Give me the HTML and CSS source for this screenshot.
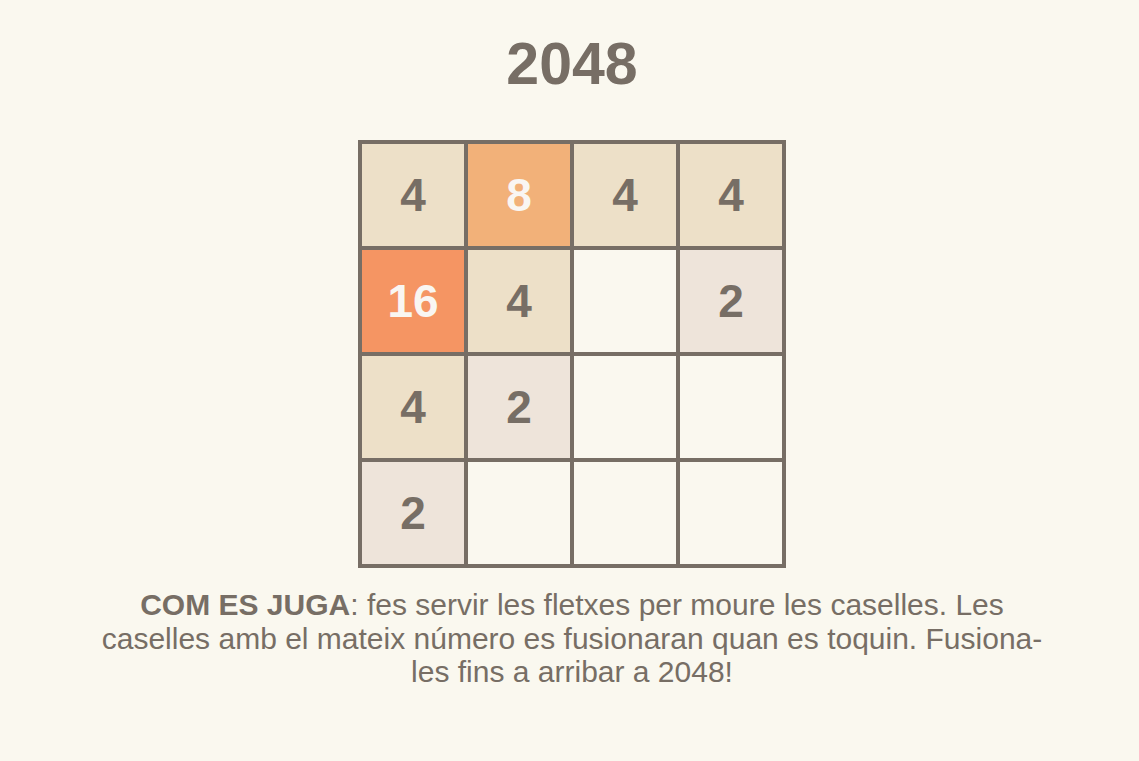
FILE: index.html
```html
<!DOCTYPE html>
<html lang="ca">
<head>
  <meta charset="UTF-8" />
  <meta name="viewport" content="width=device-width, initial-scale=1.0"/>
  <title>2048</title>
  <link rel="stylesheet" href="styles.css">
</head>
<body>
  <div class="game">
    <h1>2048</h1>

    <div class="board">
      <div class="cell t4">4</div>
      <div class="cell t8">8</div>
      <div class="cell t4">4</div>
      <div class="cell t4">4</div>

      <div class="cell t16">16</div>
      <div class="cell t4">4</div>
      <div class="cell"></div>
      <div class="cell t2">2</div>

      <div class="cell t4">4</div>
      <div class="cell t2">2</div>
      <div class="cell"></div>
      <div class="cell"></div>

      <div class="cell t2">2</div>
      <div class="cell"></div>
      <div class="cell"></div>
      <div class="cell"></div>
    </div>

    <p class="help"><strong>COM ES JUGA</strong>: fes servir les fletxes per moure les caselles. Les caselles amb el mateix número es fusionaran quan es toquin. Fusiona-les fins a arribar a 2048!</p>
  </div>
</body>
</html>
```

FILE: styles.css
```css
body {
  margin: 0;
  padding-left: 5px;
  background: #faf8ef;
  color: #776e65;
  font-family: "Liberation Sans", Arial, sans-serif;
}

.game {
  display: flex;
  flex-direction: column;
  align-items: center;
}

h1 {
  font-size: 59px;
  line-height: 59px;
  margin: 35px 0 0;
}

.board {
  display: grid;
  grid-template-columns: repeat(4, 102px);
  grid-auto-rows: 102px;
  gap: 4px;
  padding: 4px;
  margin-top: 46px;
  background: #776e65;
}

.cell {
  display: flex;
  align-items: center;
  justify-content: center;
  background: #faf8ef;
  font-size: 46px;
  font-weight: bold;
}

.t2 {
  background: #eee4da;
}

.t4 {
  background: #ede0c8;
}

.t8 {
  background: #f2b179;
  color: #f9f6f2;
}

.t16 {
  background: #f59563;
  color: #f9f6f2;
}

.help {
  width: 952px;
  margin: 20px 0 0;
  font-size: 30px;
  line-height: 33.5px;
  text-align: center;
}
```
